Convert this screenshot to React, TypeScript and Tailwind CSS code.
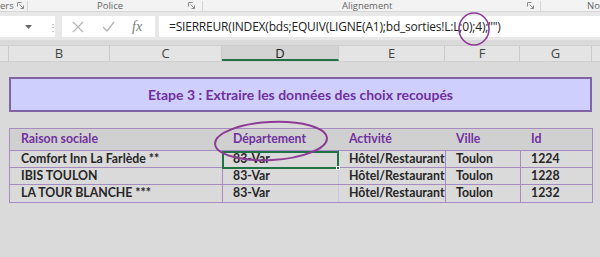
import React from "react";

const rows = [
  { name: "Comfort Inn La Farlède **", dep: "83-Var", act: "Hôtel/Restaurant", ville: "Toulon", id: "1224" },
  { name: "IBIS TOULON", dep: "83-Var", act: "Hôtel/Restaurant", ville: "Toulon", id: "1228" },
  { name: "LA TOUR BLANCHE ***", dep: "83-Var", act: "Hôtel/Restaurant", ville: "Toulon", id: "1232" },
];

function Launcher() {
  return (
    <svg width="7" height="7" viewBox="0 0 7 7" className="text-[#8a8a8a]">
      <path d="M0.5 0.5h4M0.5 0.5v4" stroke="currentColor" strokeWidth="1" fill="none" />
      <path d="M2.5 2.5l4 4M6.5 3.5v3h-3" stroke="currentColor" strokeWidth="1" fill="none" />
    </svg>
  );
}

export default function App() {
  return (
    <div className="relative w-[600px] h-[257px] overflow-hidden bg-[#dadada] font-['Open_Sans',sans-serif]">
      {/* Ribbon group labels */}
      <div className="flex h-[12px] bg-[#f3f3f3] border-b border-[#d6d6d6] text-[9.5px] leading-[10px] text-[#666] pt-[1px]">
        <div className="w-[28px] flex items-start justify-between pr-[3px] border-r border-[#d4d4d4]">
          <span>ers</span>
          <span className="pt-[1px]"><Launcher /></span>
        </div>
        <div className="w-[175px] border-r border-[#d4d4d4] flex items-start">
          <span className="ml-[69px]">Police</span>
          <span className="ml-auto mr-[7px] pt-[1px]"><Launcher /></span>
        </div>
        <div className="w-[338px] border-r border-[#d4d4d4] flex items-start">
          <span className="ml-[139px]">Alignement</span>
          <span className="ml-auto mr-[6px] pt-[1px]"><Launcher /></span>
        </div>
        <div className="flex-1 pl-[46px]">No</div>
      </div>

      {/* Formula bar */}
      <div className="flex items-stretch h-[28px] bg-[#e8e8e8] pt-[4px] pb-[3px]">
        <div className="w-[55px] bg-white flex items-center justify-end pr-[23px]">
          <svg width="7" height="4" viewBox="0 0 7 4"><path d="M0 0h7L3.5 4z" fill="#666" /></svg>
        </div>
        <div className="w-[7px]" />
        <div className="w-[0px] flex items-center text-[#9a9a9a] text-[10px] leading-none -ml-[14px] mr-[14px]">⋮</div>
        <div className="w-[93px] bg-white flex items-center">
          <svg width="12" height="12" viewBox="0 0 12 12" className="ml-[10px]">
            <path d="M1 1l10 10M11 1L1 11" stroke="#b5b5b5" strokeWidth="1.2" />
          </svg>
          <svg width="13" height="11" viewBox="0 0 13 11" className="ml-[18px]">
            <path d="M1 6l4 4 7-9" stroke="#b5b5b5" strokeWidth="1.4" fill="none" />
          </svg>
          <span className="ml-[17px] font-['Liberation_Serif',serif] italic text-[14px] text-[#7a7a7a] leading-none">fx</span>
        </div>
        <div className="w-[4px]" />
        <div className="flex-1 bg-white flex items-center pl-[10px] text-[12px] text-[#222] tracking-[-0.2px]">
          =SIERREUR(INDEX(bds;EQUIV(LIGNE(A1);bd_sorties!L:L;0);4);"")
        </div>
      </div>

      {/* Column headers */}
      <div className="mt-[5px] flex h-[17px] bg-[#e4e4e4] border-y border-[#cfcfcf] text-[13px] text-[#444] leading-[15px]">
        <div className="w-[9px] border-r border-[#cacaca]" />
        <div className="w-[101px] text-center border-r border-[#cacaca]">B</div>
        <div className="w-[112px] text-center border-r border-[#cacaca]">C</div>
        <div className="w-[117px] text-center bg-[#d3d3d3] border-b-2 border-[#217346] text-[#222] border-r border-r-[#cacaca]">D</div>
        <div className="w-[106px] text-center border-r border-[#cacaca]">E</div>
        <div className="w-[75px] text-center border-r border-[#cacaca]">F</div>
        <div className="w-[72px] text-center border-r border-[#cacaca]">G</div>
        <div className="flex-1" />
      </div>

      {/* Sheet */}
      <div className="px-[9px] pt-[15px] font-['Lato',sans-serif] font-bold">
        <div className="w-[583px] h-[35px] bg-[#cfcffd] border-2 border-[#8264a4] flex items-center justify-center text-[#7030a0] text-[14px]">
          Etape 3 : Extraire les données des choix recoupés
        </div>

        <div className="mt-[16px] w-[584px] border border-[#a48cbe] text-[12.3px]">
          <div className="flex h-[22px] items-center bg-[#d0d0d0] text-[#7030a0] border-b border-[#a48cbe]">
            <div className="w-[213px] pl-[11px]">Raison sociale</div>
            <div className="w-[116px] pl-[10px]">Département</div>
            <div className="w-[107px] pl-[10px]">Activité</div>
            <div className="w-[75px] pl-[10px]">Ville</div>
            <div className="flex-1 pl-[10px]">Id</div>
          </div>
          {rows.map((r, i) => (
            <div key={r.id} className={`flex h-[17px] items-center text-[#262626] ${i < 2 ? "border-b border-[#a48cbe]" : ""}`}>
              <div className="w-[213px] pl-[11px] h-full flex items-center border-r border-[#a48cbe]">{r.name}</div>
              <div className="w-[116px] pl-[10px] h-full flex items-center border-r border-[#c8c8e0]">{r.dep}</div>
              <div className="w-[107px] pl-[10px] h-full flex items-center border-r border-[#a48cbe]">{r.act}</div>
              <div className="w-[75px] pl-[10px] h-full flex items-center border-r border-[#a48cbe]">{r.ville}</div>
              <div className="flex-1 pl-[10px] h-full flex items-center">{r.id}</div>
            </div>
          ))}
        </div>
      </div>

      {/* Selected cell D */}
      <div className="absolute left-[222px] top-[151px] w-[117px] h-[18px] border-2 border-[#217346] pointer-events-none">
        <div className="absolute -right-[3px] -bottom-[3px] w-[4px] h-[4px] bg-[#217346] border border-white" />
      </div>

      {/* Annotations */}
      <svg className="absolute left-0 top-0 pointer-events-none" width="600" height="257">
        <ellipse cx="474" cy="29" rx="15" ry="16" fill="none" stroke="#8e3b95" strokeWidth="1.6" />
        <ellipse cx="271" cy="141" rx="56" ry="19" fill="none" stroke="#8e3b95" strokeWidth="2" transform="rotate(-3 271 141)" />
      </svg>
    </div>
  );
}
